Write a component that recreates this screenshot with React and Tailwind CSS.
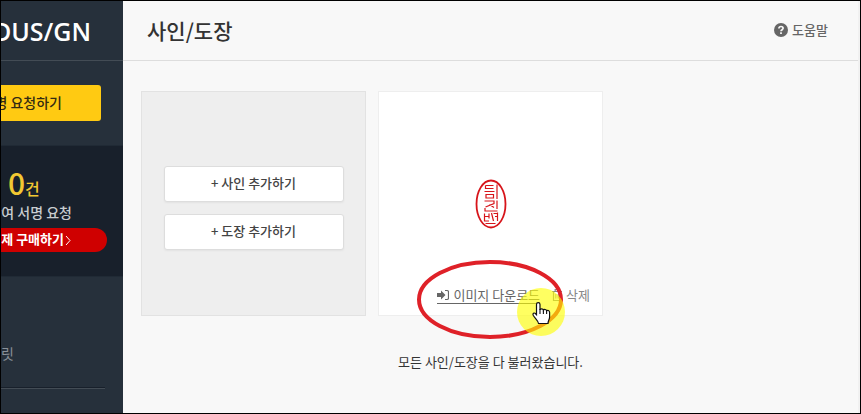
// src/pages/Signatures.jsx
import React from "react";

const addButtons = ["+ 사인 추가하기", "+ 도장 추가하기"];

const HelpIcon = () => (
  <svg className="w-[14px] h-[14px]" viewBox="0 0 14 14" aria-hidden="true">
    <circle cx="7" cy="7" r="7" fill="#666" />
    <path d="M4.9 5.5C5 4.1 5.9 3.5 7 3.5c1.200 0 2.100.7 2.100 1.800C9.100 6.700 7 6.700 7 8.300" fill="none" stroke="#f8f8f8" strokeWidth="1.700" />
    <rect x="6.100" y="9.300" width="1.800" height="1.700" fill="#f8f8f8" />
  </svg>
);

const DownloadIcon = () => (
  <svg className="w-3 h-3" viewBox="0 0 12 12" aria-hidden="true">
    <path d="M0 4h4V1.500L8.500 6 4 10.500V8H0z" fill="#666" />
    <path d="M8 1.500h2a1.500 1.500 0 0 1 1.500 1.500v6a1.500 1.500 0 0 1-1.500 1.500H8" fill="none" stroke="#666" strokeWidth="1.200" />
  </svg>
);

const TrashIcon = () => (
  <svg className="w-[10px] h-3" viewBox="0 0 10 12" fill="none" stroke="#888" aria-hidden="true">
    <path d="M0 2.500h10M3.200 2.500v-2h3.600v2M1.500 2.500v9h7v-9" strokeWidth="1.200" />
    <path d="M3.500 5v4.500M5 5v4.500M6.500 5v4.500" strokeWidth=".6" />
  </svg>
);

const Seal = () => (
  <svg className="w-8 h-[50px]" viewBox="0 0 32 50" fill="none" stroke="#d7141a" aria-label="도장" role="img">
    <ellipse cx="16" cy="25" rx="14.500" ry="23.500" strokeWidth="1.800" />
    <g strokeWidth="1.200">
      <path d="M10.500 6.500h8M10.500 6.500v3h8M9.500 12.500h10M11 15.500h7.500v3.500H11zM22 5.500V20" />
      <path d="M9.500 22h9.500v2.500l-8.500 3.500M14.500 25.500l4.500 3M22 21.500V30M10 29v3h12.500" />
      <path d="M9.500 34.500v7.500h4.500M9.500 37.500h4.500M14 34.500v5M16.500 34l2 8M18.500 34.500h4M20 37.500h3M22.500 33.500V42M10.500 44.500h10" />
    </g>
  </svg>
);

const Sidebar = () => (
  <aside className="w-[122px] shrink-0 overflow-hidden bg-[#26303b] text-white">
    <div className="h-[60px] flex items-center justify-end pr-8 border-b border-[#434c55]">
      <a href="#home" className="font-['Open_Sans',sans-serif] font-semibold text-[25px] leading-6">
        DUS/GN
      </a>
    </div>

    <div className="pt-6 pr-[22px]">
      <button className="w-full h-9 flex items-center justify-end pr-[39px] pb-[2px] rounded-r-[3px] bg-[#ffca12] text-[#332b12] text-sm font-medium whitespace-nowrap">
        명 요청하기
      </button>
    </div>

    {/* Remaining requests */}
    <section className="mt-6 h-[132px] pt-[22px] bg-[#18202b] border-y border-[#202a35]">
      <p className="flex items-baseline pl-[7px] leading-7 text-[#f2c832] font-medium">
        <span className="text-[30px]">0</span>
        <span className="text-base">건</span>
      </p>
      <p className="flex justify-end pr-[51px] text-sm leading-6 font-medium text-[#c8ccd0] whitespace-nowrap">
        잔여 서명 요청
      </p>
      <div className="pr-4 mt-1">
        <button className="w-full h-6 flex items-center justify-end pr-9 pb-[2px] rounded-r-full bg-[#cf0000] text-[13px] font-bold whitespace-nowrap">
          금제 구매하기
          <svg className="shrink-0 w-[6px] h-[11px] ml-px mt-[2px]" viewBox="0 0 6 11" fill="none" stroke="#fff" aria-hidden="true">
            <path d="M1 1l4 4.500L1 10" />
          </svg>
        </button>
      </div>
    </section>

    <nav className="pt-16 pr-[18px]">
      <a href="#templates" className="block h-[46px] text-sm leading-6 text-[#8a9199]">
        릿
      </a>
      <hr className="h-[2px] border-t border-b border-t-[#18202b] border-b-[#434c55]" />
    </nav>
  </aside>
);

// Ring, highlight and pointer over the download link
const Pointer = () => (
  <div className="absolute left-[38px] top-[168px] pointer-events-none">
    <svg className="w-[150px] h-20" viewBox="0 0 150 80" aria-hidden="true">
      <ellipse cx="73" cy="39.500" rx="71" ry="37.500" fill="none" stroke="#df2128" strokeWidth="4" />
      <circle cx="124" cy="52" r="24" fill="#ffff00" opacity=".62" />
      <path
        d="M119.500 44.500c0-2.500 3.500-2.500 3.500 0v5.500c.3-1.600 3.200-1.500 3.400.3.700-1.300 3-1 3.200.6.900-1 3-.5 3 1.600v4.500c0 2.500-1.600 3.500-1.600 6.500h-9.500c-.5-3-3.500-5-5.300-8.200-.9-1.700.8-3 2.200-1.800l1.100 1.200z"
        fill="#fff"
        stroke="#111"
        strokeWidth="1.200"
      />
      <path d="M123 49v5M126.400 50.500V54M129.600 51v3" stroke="#111" strokeWidth="1.100" />
    </svg>
  </div>
);

const App = () => {
  return (
    <div className="min-h-screen flex border border-black bg-[#f8f8f8] font-['Noto_Sans_CJK_KR',sans-serif] text-[#333]">
      <Sidebar />

      <main className="flex-1 min-w-0 border-r-2 border-[#f1f1f1]">
        <header className="h-[60px] flex items-center justify-between pl-6 pr-[30px] pb-[2px] border-b border-[#dddddd]">
          <h1 className="text-[21px] font-medium leading-8">사인/도장</h1>
          <a href="#help" className="flex items-center gap-1 text-[13px] font-medium text-[#666]">
            <HelpIcon />
            도움말
          </a>
        </header>

        <div className="pt-[30px] px-[18px]">
          <div className="flex gap-3">
            <div className="w-[225px] h-[225px] flex flex-col items-center justify-center gap-3 pt-2 border border-[#e2e2e2] bg-[#eeeeee]">
              {addButtons.map((label) => (
                <button
                  key={label}
                  className="w-[180px] h-9 pb-[2px] rounded-[3px] border border-[#dddddd] bg-white shadow-xs text-[13px] font-medium text-[#444]"
                >
                  {label}
                </button>
              ))}
            </div>

            <div className="relative w-[225px] h-[225px] flex flex-col border border-[#eeeeee] bg-white">
              <div className="flex-1 flex items-center justify-center pt-9">
                <Seal />
              </div>
              <div className="flex items-center justify-end gap-3 h-8 pr-3 mb-1 text-[13px] whitespace-nowrap">
                <a href="#download" className="flex items-center gap-1 leading-4 border-b border-[#666] text-[#666]">
                  <DownloadIcon />
                  이미지 다운로드
                </a>
                <button className="flex items-center gap-1 leading-4 text-[#888]">
                  <TrashIcon />
                  삭제
                </button>
              </div>
              <Pointer />
            </div>
          </div>

          <p className="mt-[34px] text-center text-[13px] leading-6">모든 사인/도장을 다 불러왔습니다.</p>
        </div>
      </main>
    </div>
  );
};

export default App;
